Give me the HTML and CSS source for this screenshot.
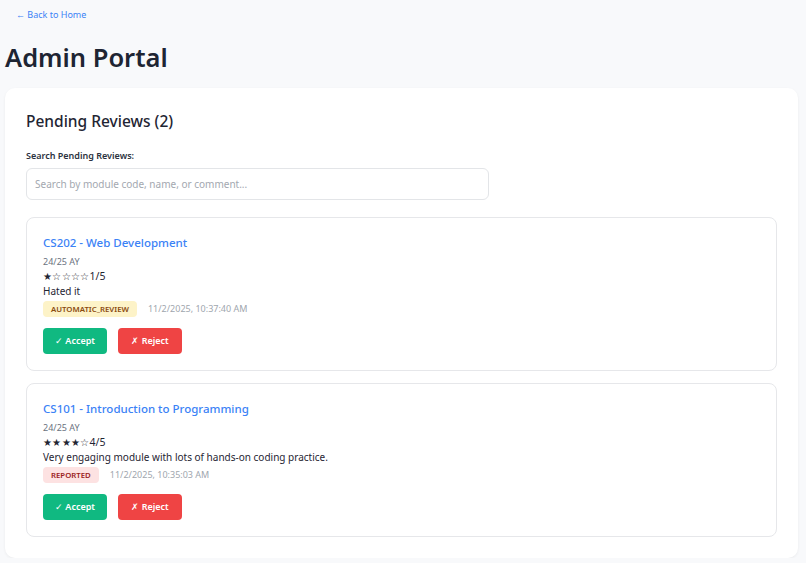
FILE: index.html
```html
<!DOCTYPE html>
<html lang="en">
<head>
<meta charset="utf-8">
<title>Admin Portal</title>
<link rel="stylesheet" href="styles.css">
</head>
<body>
<div class="page">
  <a class="back" href="#">← Back to Home</a>
  <h1 class="title">Admin Portal</h1>
  <section class="panel">
    <h2 class="panel-title">Pending Reviews (2)</h2>
    <label class="search-label" for="q">Search Pending Reviews:</label>
    <input id="q" class="search" type="text" placeholder="Search by module code, name, or comment...">
    <div class="list">
      <article class="review">
        <h3 class="module">CS202 - Web Development</h3>
        <div class="ay">24/25 AY</div>
        <div class="rating"><span class="stars">★☆☆☆☆</span>1/5</div>
        <p class="comment">Hated it</p>
        <div class="meta">
          <span class="badge badge-auto">AUTOMATIC_REVIEW</span>
          <span class="time">11/2/2025, 10:37:40 AM</span>
        </div>
        <div class="actions">
          <button class="btn btn-accept"><span class="ico">✓</span> Accept</button>
          <button class="btn btn-reject"><span class="ico">✗</span> Reject</button>
        </div>
      </article>
      <article class="review">
        <h3 class="module">CS101 - Introduction to Programming</h3>
        <div class="ay">24/25 AY</div>
        <div class="rating"><span class="stars">★★★★☆</span>4/5</div>
        <p class="comment">Very engaging module with lots of hands-on coding practice.</p>
        <div class="meta">
          <span class="badge badge-reported">REPORTED</span>
          <span class="time">11/2/2025, 10:35:03 AM</span>
        </div>
        <div class="actions">
          <button class="btn btn-accept"><span class="ico">✓</span> Accept</button>
          <button class="btn btn-reject"><span class="ico">✗</span> Reject</button>
        </div>
      </article>
    </div>
  </section>
</div>
</body>
</html>
```

FILE: styles.css
```css
* { box-sizing: border-box; }
html, body {
  margin: 0;
  padding: 0;
  background: #f8f9fb;
  font-family: "Noto Sans", "Open Sans", sans-serif;
  color: #1f2533;
}
.page {
  display: flex;
  flex-direction: column;
  padding: 0 8px 0 5px;
}
.back {
  align-self: flex-start;
  margin: 8px 0 0 11px;
  font-size: 9px;
  line-height: 14px;
  color: #3b82f6;
  text-decoration: none;
}
.title {
  margin: 18px 0 0 0;
  font-size: 25.5px;
  line-height: 34px;
  font-weight: 600;
  color: #1e2533;
}
.panel {
  margin-top: 14px;
  background: #fff;
  border-radius: 10px;
  box-shadow: 0 1px 3px rgba(0,0,0,0.06);
  padding: 21px 21px 21px 21px;
  display: flex;
  flex-direction: column;
}
.panel-title {
  margin: 0;
  font-size: 15.5px;
  line-height: 24px;
  font-weight: 500;
  color: #1f2533;
}
.search-label {
  margin-top: 16px;
  font-size: 9px;
  line-height: 14px;
  font-weight: 600;
  color: #2b3240;
}
.search {
  margin-top: 5px;
  width: 463px;
  height: 32px;
  border: 1px solid #e3e5e8;
  border-radius: 6px;
  padding: 0 8px;
  font-family: inherit;
  font-size: 10px;
  color: #1f2533;
  background: #fff;
  outline: none;
}
.search::placeholder { color: #a3a8b0; }
.list {
  margin-top: 17px;
  display: flex;
  flex-direction: column;
  gap: 12px;
}
.review {
  border: 1.5px solid #e6e7ea;
  border-radius: 8px;
  padding: 17px 16px 16px 16px;
  height: 154px;
  display: flex;
  flex-direction: column;
}
.module {
  margin: 0;
  font-size: 11.5px;
  line-height: 16px;
  font-weight: 500;
  color: #3b82f6;
}
.ay {
  margin-top: 4px;
  font-size: 9px;
  line-height: 14px;
  color: #6b7280;
}
.rating {
  font-size: 10.5px;
  line-height: 15px;
  color: #1f2533;
}
.stars { font-size: 10px; letter-spacing: 0.3px; }
.comment {
  margin: 0;
  font-size: 10px;
  line-height: 15px;
  color: #1f2533;
}
.meta {
  margin-top: 1.5px;
  display: flex;
  align-items: center;
  gap: 11px;
}
.badge {
  font-size: 7.8px;
  font-weight: 600;
  line-height: 16px;
  padding: 0 8px;
  border-radius: 4px;
}
.badge-auto { background: #fdf3c8; color: #8a4b10; }
.badge-reported { background: #fde2e2; color: #9b1c1c; }
.time {
  font-size: 9px;
  color: #a0a6ae;
}
.actions {
  margin-top: 11px;
  display: flex;
  gap: 11px;
}
.btn {
  width: 64px;
  height: 26px;
  border: none;
  border-radius: 4px;
  color: #fff;
  font-family: inherit;
  font-size: 9px;
  font-weight: 600;
  cursor: pointer;
}
.btn .ico { font-weight: 400; }
.btn-accept { background: #10b981; }
.btn-reject { background: #ef4444; }
```
